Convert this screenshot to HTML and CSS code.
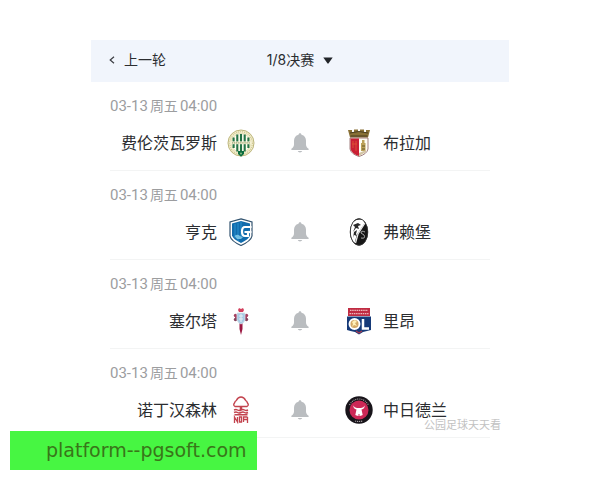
FILE: index.html
```html
<!DOCTYPE html>
<html lang="zh-CN">
<head>
<meta charset="utf-8">
<meta name="viewport" content="width=device-width, initial-scale=1">
<title>1/8决赛</title>
<link rel="stylesheet" href="styles.css">
</head>
<body>
<svg class="defs" aria-hidden="true">
  <symbol id="bell" viewBox="0 0 18 20">
    <path d="M9 0.3c.9 0 1.4.6 1.5 1.5 3 .8 4.5 3 4.5 6v3.700c0 2 1.100 3.300 2.600 4.300v1.200H.4v-1.200C1.900 14.800 3 13.500 3 11.500V7.800c0-3 1.500-5.200 4.500-6C7.600.9 8.100.3 9 .3zM6.800 18.100h4.400c-.4 1.700-4 1.700-4.400 0z"/>
  </symbol>
</svg>
<main class="card">
  <header class="bar">
    <button class="prev" type="button">
      <svg class="chevron" viewBox="0 0 6 8" aria-hidden="true"><path d="M5 .7 1.200 4 5 7.300"/></svg>
      上一轮
    </button>
    <button class="round" type="button">
      1/8决赛
      <svg class="caret" viewBox="0 0 10 7" aria-hidden="true"><path d="M.3.5h9.400L5.600 6.300q-.6.700-1.200 0z"/></svg>
    </button>
  </header>

  <section class="match">
    <time class="date">03-13<span>周五</span>04:00</time>
    <div class="teams">
      <span class="home">费伦茨瓦罗斯</span>
      <svg class="crest" viewBox="0 0 28 28" aria-hidden="true">
        <circle cx="14" cy="14" r="13" fill="#f3efd0" stroke="#bdb67c" stroke-width="1"/>
        <circle cx="14" cy="14" r="11.300" fill="none" stroke="#cfc68e" stroke-width="1.200" stroke-dasharray="1 1"/>
        <circle cx="14" cy="14" r="9.500" fill="#fffef0" stroke="#d1c890" stroke-width=".5"/>
        <path d="M6.600 8.500v10.500M10.300 5.500v17M14 5v18M17.700 5.500v17M21.400 8.500v10.500" stroke="#257447" stroke-width="2.100"/>
        <path d="M3.500 12.400h21v2.800h-21z" fill="#f5f1d4"/>
        <path d="M5 13.800h18" stroke="#9aa578" stroke-width="1.200" stroke-dasharray="1.200 .7"/>
        <path d="M11 22h6v3l-3 2.800-3-2.800z" fill="#0b6d3f"/>
        <circle cx="14" cy="24.500" r="1" fill="#8cba81"/>
      </svg>
      <button class="remind" type="button" aria-label="提醒"><svg viewBox="0 0 18 20"><use href="#bell"/></svg></button>
      <svg class="crest" viewBox="0 0 28 28" aria-hidden="true">
        <path d="M3 1h4v2h2V.5h4V3h2V.5h4V3h2V1h4l-2 7.500H5z" fill="#897136"/>
        <path d="M5 4q9-3 18 0M5.500 7h17" fill="none" stroke="#493d20" stroke-width="1"/>
        <path d="M5 9h18v11q-1 5-9 7.500Q6 25 5 20z" fill="#fffdf5" stroke="#8c6060" stroke-width=".8"/>
        <path d="M5.500 9.500H14V27q-7.500-2.500-8.500-7z" fill="#c91f34"/>
        <path d="M8 12v7m3-7v10M7 15h5" stroke="#dc4e35" stroke-width="1"/>
        <path d="M16 14h4.500v8H16zM17 11h2.500v3H17z" fill="#bca15a"/>
        <path d="M17 17h3m-3 3h3" stroke="#655629"/>
        <path d="M14 24v3l7-4v-2z" fill="#d3c5a4"/>
      </svg>
      <span class="away">布拉加</span>
    </div>
  </section>

  <section class="match">
    <time class="date">03-13<span>周五</span>04:00</time>
    <div class="teams">
      <span class="home">亨克</span>
      <svg class="crest" viewBox="0 0 28 28" aria-hidden="true">
        <path d="M14 .8 25 4v14q-1 5-11 9.500Q4 23 3 18V4z" fill="#fff" stroke="#32536f" stroke-width="1.200"/>
        <path d="M14 3 23 5.500v12q-1 3.500-9 7.500-8-4-9-7.500v-12z" fill="#116bac"/>
        <path d="M8 6v14M11 5v18M14 4v14" stroke="#2991cf" stroke-width="1"/>
        <path d="M24.500 9H18q-3 0-3 4.500t3 4.500h3v-4h-3.500" fill="none" stroke="#fff" stroke-width="2.200"/>
        <path d="M21 14h3.500" stroke="#fff" stroke-width="2.200"/>
        <path d="M7.500 18q3-2.500 5.500 0l3 1-2 2h-4z" fill="#72bfe3"/>
      </svg>
      <button class="remind" type="button" aria-label="提醒"><svg viewBox="0 0 18 20"><use href="#bell"/></svg></button>
      <svg class="crest" viewBox="0 0 28 28" aria-hidden="true">
        <ellipse cx="14" cy="14" rx="9" ry="13.500" fill="#161616"/>
        <path d="M18 1.800Q5 0 5.700 14q0 8 4 11l2-8 8-12z" fill="#fff"/>
        <path d="m8 7 5-2 3 2-3 1 1 3-3-1-3 4 2-5zm1 7 3-2-1 4 1 2-3-1-1 3z" fill="#292929"/>
        <path d="m10.500 25 2.500-9 7-11" fill="none" stroke="#e9e9e9" stroke-width="1.300"/>
        <path d="M20 14q-4-2-4 1l3 2q2 4-3 3" fill="none" stroke="#a9a9a9" stroke-width="1"/>
        <ellipse cx="14" cy="14" rx="8.800" ry="13.300" fill="none" stroke="#333" stroke-width=".9"/>
      </svg>
      <span class="away">弗赖堡</span>
    </div>
  </section>

  <section class="match">
    <time class="date">03-13<span>周五</span>04:00</time>
    <div class="teams">
      <span class="home">塞尔塔</span>
      <svg class="crest" viewBox="0 0 28 28" aria-hidden="true">
        <path d="M12.500 14h3v8L14 28l-1.500-6z" fill="#9b1842"/>
        <path d="m12 5-1-2 1-2 2 1 2-1 1 2-1 2z" fill="#d3405e"/>
        <path d="M8 8.500h12v4H8z" fill="#b53f67"/>
        <circle cx="8.500" cy="8.500" r="1.700" fill="#a64261"/><circle cx="8.500" cy="12.500" r="1.700" fill="#84445d"/>
        <circle cx="19.500" cy="8.500" r="1.700" fill="#a64261"/><circle cx="19.500" cy="12.500" r="1.700" fill="#84445d"/>
        <path d="M10 6h8v7q-1 3-4 4-3-1-4-4z" fill="#a8cbe5" stroke="#d5dfe7" stroke-width=".8"/>
        <path d="M12 9h4m-4 3h4m-2-5v8" stroke="#e9f0f4" stroke-width="1"/>
      </svg>
      <button class="remind" type="button" aria-label="提醒"><svg viewBox="0 0 18 20"><use href="#bell"/></svg></button>
      <svg class="crest" viewBox="0 0 28 28" aria-hidden="true">
        <path d="M3 1h22v8H3z" fill="#c02c43"/>
        <path d="M5 3.300h18M4.500 6.700h19" stroke="#edb8bd" stroke-width="1.200" stroke-dasharray="1.500 .7"/>
        <path d="M2 9.500h24V23q-4 1-8 2l-4 2.500-4-2.500q-5-1-8-2z" fill="#163a78"/>
        <circle cx="9.500" cy="17" r="5" fill="#d4a966" stroke="#fff" stroke-width="1.900"/>
        <path d="m7 15 3-2 2 2-2 1 2 3-3-1-2 2 1-3z" fill="#fff0b9"/>
        <path d="M18 12v9.500h6" fill="none" stroke="#fff" stroke-width="2.500"/>
        <path d="m11 24 3 2 3-2" fill="none" stroke="#a53b52" stroke-width="1.300"/>
      </svg>
      <span class="away">里昂</span>
    </div>
  </section>

  <section class="match">
    <time class="date">03-13<span>周五</span>04:00</time>
    <div class="teams">
      <span class="home">诺丁汉森林</span>
      <svg class="crest" viewBox="0 0 28 28" aria-hidden="true">
        <g fill="none" stroke="#c3434e">
          <path d="M12.500 10.500H8q-2.300-1.300-.5-3.500.5-2 2-2.700Q11 1 14 1q3 0 4.500 3.300 1.500.7 2 2.700 1.800 2.200-.5 3.500z" stroke-width="1.400"/>
          <path d="M14 11v3" stroke-width="2.500"/>
          <path d="M7 14q2-1 3.500 0t3.500 0 3.500 0 3.500 0M7 16.500q2-1 3.500 0t3.500 0 3.500 0 3.500 0M7.500 18.700h13" stroke-width="1.400"/>
          <path d="M7.500 27v-6l3 5v-5m2 0v5h2v-5zm4 5v-5h4m-4 2.500h4m0-2.500v6" stroke-width="1.300"/>
        </g>
      </svg>
      <button class="remind" type="button" aria-label="提醒"><svg viewBox="0 0 18 20"><use href="#bell"/></svg></button>
      <svg class="crest" viewBox="0 0 28 28" aria-hidden="true">
        <circle cx="14" cy="14" r="13.700" fill="#18141a"/>
        <path d="M4.500 9Q8 3 14 3t9.500 6" fill="none" stroke="#a9a1a4" stroke-width="1.200" stroke-dasharray="1 1"/>
        <path d="M10 25q4 1 8 0" fill="none" stroke="#a9a1a4" stroke-width="1.200" stroke-dasharray="1.200 .8"/>
        <circle cx="14" cy="14" r="9.500" fill="#cc2856"/>
        <path d="M8.500 9.500q.5 2 3.500 2.500h4q3-.5 3.500-2.500.5 3-3 4l1.200 5.500q-3.700 2-7.400 0l1.200-5.500q-3.500-1-3-4z" fill="#fff"/>
        <path d="M14 18v2" stroke="#cc2856" stroke-width="1"/>
      </svg>
      <span class="away">中日德兰</span>
    </div>
    <span class="watermark">公园足球天天看</span>
  </section>
</main>
<a class="banner" href="#">platform--pgsoft.com</a>
</body>
</html>
```
FILE: styles.css
```css
* {
  box-sizing: border-box;
}

body {
  margin: 0;
  padding: 40px 91px 0;
  background: #fff;
  color: #2b2d30;
  font-family: Inter, "Noto Sans CJK SC", sans-serif;
}

button {
  border: 0;
  padding: 0;
  background: none;
  color: inherit;
  font: inherit;
  cursor: pointer;
}

.defs {
  display: none;
}

.bar {
  display: grid;
  grid-template-columns: 1fr auto 1fr;
  align-items: center;
  padding: 10px 18px 12px;
  background: #f1f5fc;
  font-size: 14px;
  line-height: 20px;
}

.prev,
.round {
  display: flex;
  align-items: center;
  gap: 9px;
}

.chevron {
  width: 6px;
  height: 8px;
  fill: none;
  stroke: #3b3d42;
  stroke-width: 1.2;
}

.caret {
  width: 10px;
  height: 7px;
  fill: #222529;
}

.match {
  position: relative;
  margin: 0 19px;
  padding: 14px 0 13px;
  border-bottom: 1px solid #f3f4f4;
}

.date {
  display: flex;
  gap: 2px;
  color: #9c9d9f;
  font-family: Roboto, "Noto Sans CJK SC", sans-serif;
  font-size: 15px;
  line-height: 20px;
}

.date span {
  font-size: 14px;
}

.teams {
  display: grid;
  grid-template-columns: 1fr 28px 70px 28px 1fr;
  align-items: center;
  margin-top: 13px;
  column-gap: 10px;
  font-size: 16px;
  line-height: 24px;
}

.home {
  text-align: right;
}

.crest {
  width: 28px;
  height: 28px;
}

.remind {
  display: flex;
  justify-content: center;
}

.remind svg {
  width: 18px;
  height: 20px;
  fill: #babdc0;
}

.watermark {
  position: absolute;
  right: -11px;
  bottom: 4px;
  color: #c2c2c2;
  font-size: 11px;
  line-height: 16px;
}

.banner {
  position: absolute;
  left: 10px;
  bottom: 10px;
  padding: 8px 23px;
  padding-left: 36px;
  padding-right: 10px;
  background: #47f642;
  color: #397519;
  font-family: "DejaVu Sans", sans-serif;
  font-size: 19px;
  line-height: 23px;
  text-decoration: none;
}
```
